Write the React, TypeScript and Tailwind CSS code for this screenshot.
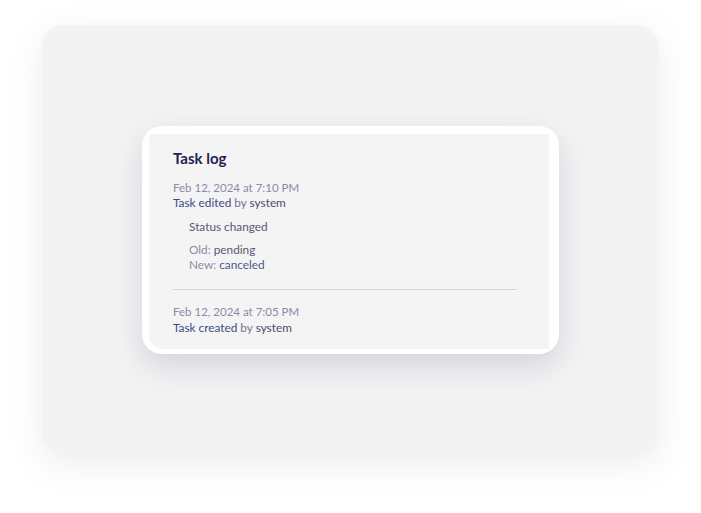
import React from "react";

export default function App() {
  return (
    <div className="w-[701px] h-[513px] bg-white pt-[25px] pl-[42px]" style={{ fontFamily: "Lato, 'Noto Sans', sans-serif" }}>
      <div className="w-[617px] h-[429px] rounded-[22px] bg-[#f3f3f4] shadow-[0_10px_34px_rgba(120,125,150,0.14)] flex items-center justify-center">
        <div className="w-[417px] h-[228px] rounded-[20px] bg-white overflow-hidden shadow-[0_12px_30px_rgba(110,115,140,0.24)] pt-[8px] pl-[7px]">
          <div className="w-[400px] h-[215px] bg-[#f4f4f5] rounded-tl-[3px] rounded-bl-[14px] pt-[14px] pl-[24px] pr-[32px]">
            <div className="text-[15px] leading-[20px] font-bold text-[#1e1f4f]">Task log</div>
            <div className="mt-[12px] text-[11.5px] leading-[15px] text-[#8b8ba1]">Feb 12, 2024 at 7:10 PM</div>
            <div className="text-[11.8px] leading-[15px]">
              <span className="text-[#3f4a7e]">Task edited</span>
              <span className="text-[#74748a]"> by </span>
              <span className="text-[#4d4b6b]">system</span>
            </div>
            <div className="pl-[16px] mt-[9px] text-[11.8px] leading-[15px] text-[#5b5676]">Status changed</div>
            <div className="pl-[16px] mt-[8px] text-[11.8px] leading-[15.5px]">
              <div>
                <span className="text-[#8b8ba1]">Old: </span>
                <span className="text-[#5b5676]">pending</span>
              </div>
              <div>
                <span className="text-[#8b8ba1]">New: </span>
                <span className="text-[#4a5a8c]">canceled</span>
              </div>
            </div>
            <div className="mt-[16.5px] h-px bg-[#d3d6e2]" />
            <div className="mt-[14px] text-[11.5px] leading-[15px] text-[#8b8ba1]">Feb 12, 2024 at 7:05 PM</div>
            <div className="mt-px text-[11.8px] leading-[15px]">
              <span className="text-[#3f4a7e]">Task created</span>
              <span className="text-[#74748a]"> by </span>
              <span className="text-[#4d4b6b]">system</span>
            </div>
          </div>
        </div>
      </div>
    </div>
  );
}
